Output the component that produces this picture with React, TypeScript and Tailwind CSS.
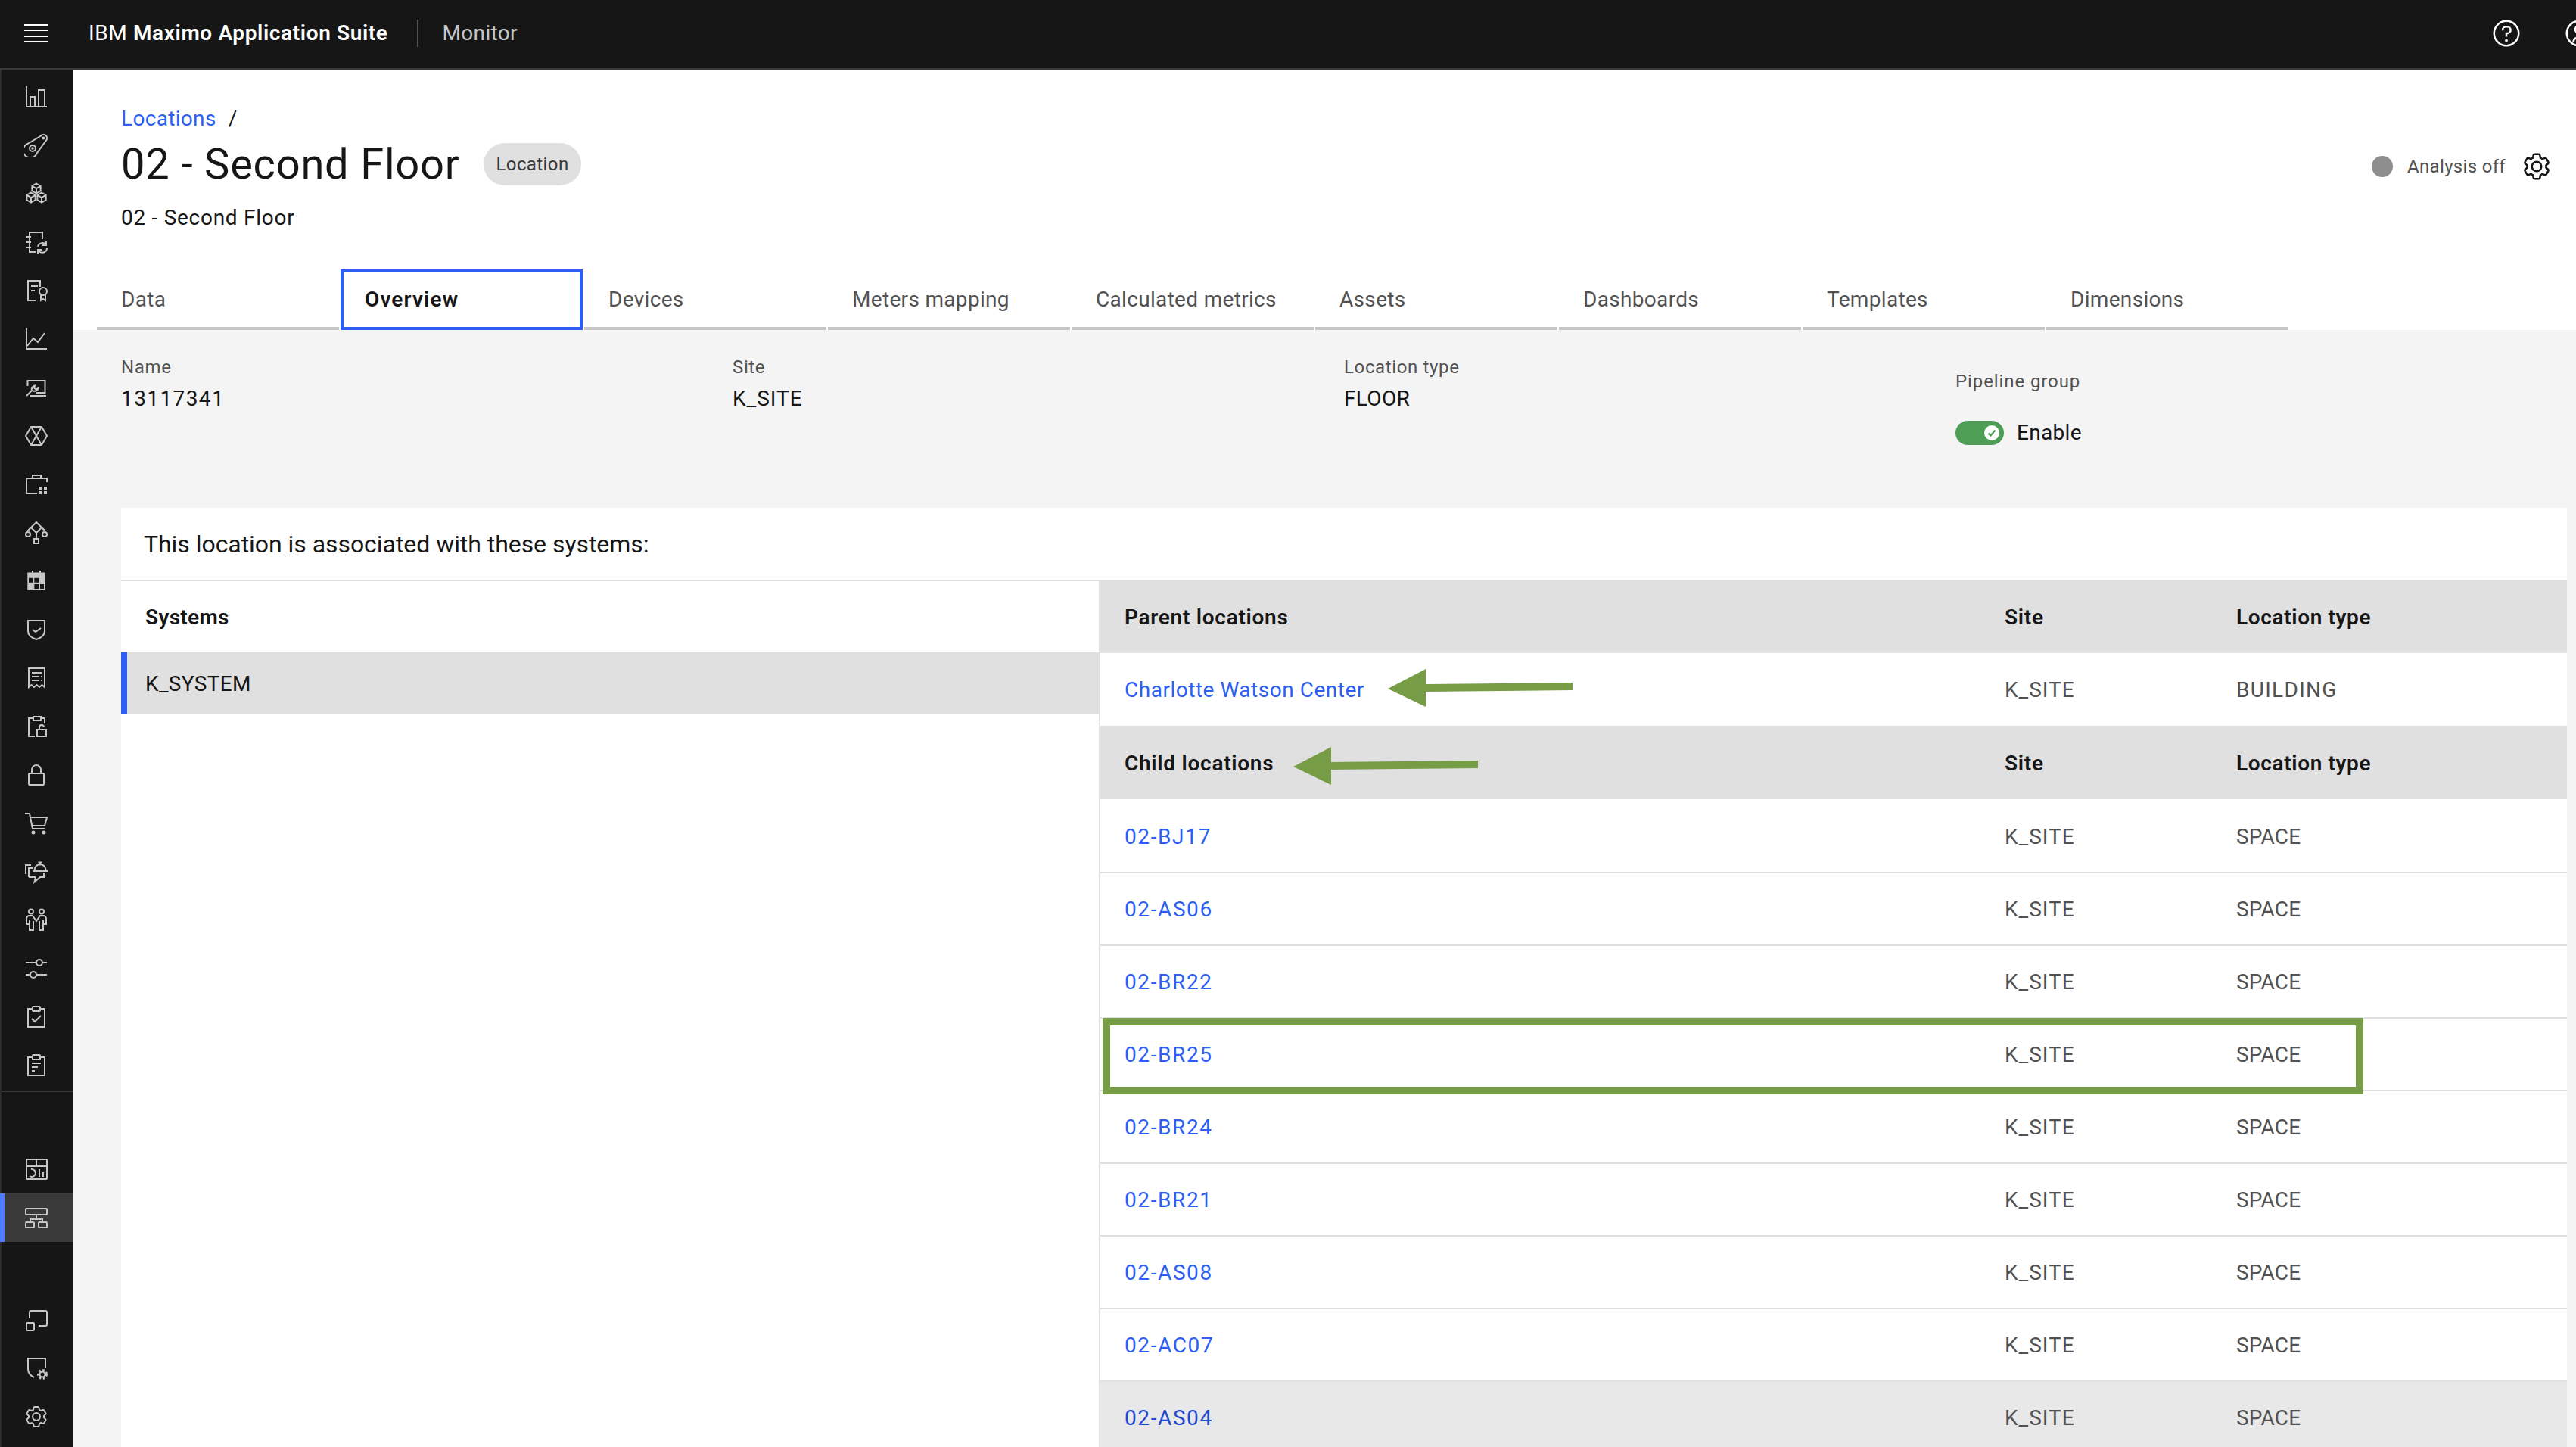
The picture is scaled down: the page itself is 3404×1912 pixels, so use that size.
import React from "react";

const SETTINGS = "M27 16.76c0-.25 0-.5 0-.76s0-.51 0-.77l1.92-1.68A2 2 0 0 0 29.3 11l-2.36-4a2 2 0 0 0-1.73-1 2 2 0 0 0-.64.1l-2.43.82a11.35 11.35 0 0 0-1.31-.75l-.51-2.52a2 2 0 0 0-2-1.61h-4.68a2 2 0 0 0-2 1.61l-.51 2.52a11.48 11.48 0 0 0-1.32.75l-2.38-.86A2 2 0 0 0 6.79 6a2 2 0 0 0-1.73 1L2.7 11a2 2 0 0 0 .41 2.51L5 15.24c0 .25 0 .5 0 .76s0 .51 0 .77l-1.92 1.68A2 2 0 0 0 2.7 21l2.36 4a2 2 0 0 0 1.73 1 2 2 0 0 0 .64-.1l2.43-.82a11.35 11.35 0 0 0 1.31.75l.51 2.52a2 2 0 0 0 2 1.61h4.72a2 2 0 0 0 2-1.61l.51-2.52a11.48 11.48 0 0 0 1.32-.75l2.42.82a2 2 0 0 0 .64.1 2 2 0 0 0 1.73-1l2.28-4a2 2 0 0 0-.41-2.51ZM25.21 24l-3.43-1.16a8.86 8.86 0 0 1-2.71 1.57L18.36 28h-4.72l-.71-3.55a9.36 9.36 0 0 1-2.7-1.57L6.79 24l-2.36-4 2.72-2.4a8.9 8.9 0 0 1 0-3.13L4.43 12l2.36-4 3.43 1.16a8.86 8.86 0 0 1 2.71-1.57L13.64 4h4.72l.71 3.55a9.36 9.36 0 0 1 2.7 1.57L25.21 8l2.36 4-2.72 2.4a8.9 8.9 0 0 1 0 3.13L27.57 20Z";
const SETTINGS2 = "M16 22a6 6 0 1 1 6-6 5.94 5.94 0 0 1-6 6Zm0-10a3.91 3.91 0 0 0-4 4 3.91 3.91 0 0 0 4 4 3.91 3.91 0 0 0 4-4 3.91 3.91 0 0 0-4-4Z";

function cube(cx: number, cy: number, r: number) {
  const w = r * 0.87;
  return `M${cx} ${cy - r}L${cx + w} ${cy - r / 2}V${cy + r / 2}L${cx} ${cy + r}L${cx - w} ${cy + r / 2}V${cy - r / 2}ZM${cx - w} ${cy - r / 2}L${cx} ${cy}L${cx + w} ${cy - r / 2}M${cx} ${cy}V${cy + r}`;
}

function Ico({ children }: { children: React.ReactNode }) {
  return (
    <svg width="32" height="32" viewBox="0 0 32 32" fill="none" stroke="currentColor" strokeWidth="2">
      {children}
    </svg>
  );
}

const icons: React.ReactNode[] = [
  <Ico><path d="M3 2v27h27M8 29V16h6v13M19 29V7h8v22" /></Ico>,
  <Ico><path d="M4.5 14L22 3.5A4.5 4.5 0 0 1 29 9.5L17 26A9.5 9.5 0 1 1 4.5 14z" /><circle cx="11" cy="20" r="4" /><circle cx="11" cy="20" r="0.8" /><circle cx="25.3" cy="6.5" r="1" /></Ico>,
  <Ico><path d={cube(16, 9, 6.5)} /><path d={cube(9, 21, 6.5)} /><path d={cube(23, 21, 6.5)} /></Ico>,
  <Ico><path d="M24 12V3H7v26h8M3 9h6M3 16h6M3 23h6M18 22a6 6 0 0 1 11-2M30 24a6 6 0 0 1-11 3M29 15v5h-5M18 31v-5h5" /></Ico>,
  <Ico><path d="M15 29H5V3h16v8M9 10h9M9 16h5" /><circle cx="25" cy="17" r="5" /><path d="M22 21v8l3-2 3 2v-8" /></Ico>,
  <Ico><path d="M3 2v27h27M4 25l8-10 6 5 9-12" /></Ico>,
  <Ico><path d="M4.5 14V7h23v16H16M8 27h21M3 27l7-7M10 20c-1-3 1-6 4-6.5l-1 3 2.5 2 3-1.5c-.5 3-4 5-8.5 3" /></Ico>,
  <Ico><path d="M9 4h14l7 12-7 12H9L2 16zM9 4l14 24M23 4L9 28" /></Ico>,
  <Ico><path d="M30 13V8H3v20h14M11 8V4h11v4" /><path fill="currentColor" stroke="none" d="M19 19h5v4h-5zM26 19h4v4h-4zM19 25h5v4h-5zM26 25h4v4h-4z" /></Ico>,
  <Ico><path d="M16 2l7 7-7 7-7-7zM9 9l-5 5M23 9l5 5M16 16v7" /><circle cx="5" cy="18" r="3" /><circle cx="27" cy="18" r="3" /><rect x="13" y="24" width="6" height="6" /></Ico>,
  <svg width="32" height="32" viewBox="0 0 32 32" fill="currentColor">
    <path fillRule="evenodd" d="M10 2h2v2.500h8V2h2v2.500h5.700V27.700H4.300V4.500H10zM6 11.700v6h5v-6zM13.300 11.700v6h6v-6zM13.300 20v6h6v-6zM21 20v6h5v-6z" />
  </svg>,
  <Ico><path d="M5 4h22v14c0 5-5 9-11 11-6-2-11-6-11-11zM11 16l4 3 7-5" /></Ico>,
  <Ico><path d="M6 3h21v25l-3.5-3-3.5 3-3.5-3-3.500 3-3.500-3-3.500 3zM10 9h13M10 14h9M10 19h9M22 14h2M22 19h2" /></Ico>,
  <Ico><path d="M12 5H6v24h8M22 5h5v7M12 3h10v5H12z" /><rect x="17" y="20" width="12" height="9" /><path d="M20 20v-3a3 3 0 0 1 6 0" /></Ico>,
  <Ico><rect x="6" y="14" width="20" height="15" rx="1" /><path d="M10 14V9a6 6 0 0 1 12 0v5" /></Ico>,
  <Ico><path d="M1 3h6l4 20h16M8 8h22l-3 11H10" /><circle cx="12" cy="28" r="1.5" fill="currentColor" /><circle cx="26" cy="28" r="1.5" fill="currentColor" /></Ico>,
  <Ico><path d="M2 19V7h7M6 23V11h6M6 23h9M15 23l-1.500 6.500L21 23h5v-5M13.500 13.500a7.500 7.500 0 0 1 15 0M12 15h19M18.500 3.500h5M21 3.500v4" /></Ico>,
  <Ico><circle cx="9" cy="4.500" r="3" /><circle cx="23" cy="4.500" r="3" /><path d="M3 21v-7a4 4 0 0 1 4-4h4l5 7 5-7h4a4 4 0 0 1 4 4v7h-3M7 21H3M7 16v13h5V17M25 16v13h-5V17" /></Ico>,
  <Ico><path d="M2 8h14M24 8h6M2 24h6M16 24h14" /><circle cx="20" cy="8" r="4" /><circle cx="12" cy="24" r="4" /></Ico>,
  <Ico><path d="M11 5H5v24h22V5h-6M10 18l4 4 8-8" /><rect x="11" y="2" width="10" height="6" rx="1" /></Ico>,
  <Ico><path d="M11 5H5v24h22V5h-6M10 13h12M10 18h8M10 23h4" /><rect x="11" y="2" width="10" height="6" rx="1" /></Ico>,
];

const tableIcon = <Ico><rect x="3" y="3" width="27" height="26" rx="1" /><path d="M3 12h27M16 3v9M20 26V16M25 26v-6M9 16a5 5 0 1 1-2 9" /></Ico>;
const hierIcon = <Ico><rect x="2" y="4" width="28" height="8" rx="1" /><path d="M16 12v6M8 22v-4h16v4" /><rect x="2" y="22" width="11" height="7" rx="1" /><rect x="19" y="22" width="11" height="7" rx="1" /></Ico>;
const resizeIcon = <Ico><path d="M7 14V6a2 2 0 0 1 2-2h19a2 2 0 0 1 2 2v16a2 2 0 0 1-2 2h-9" /><rect x="3" y="20" width="10" height="10" rx="1" /></Ico>;
const shieldGear = <Ico><path d="M28 16V3H5v14c0 5 4 9 8 11" /><circle cx="24" cy="24" r="3.500" /><circle cx="24" cy="24" r="5.500" strokeWidth="3" strokeDasharray="2.500 2.600" /></Ico>;
const gearIcon = (
  <svg width="32" height="32" viewBox="0 0 32 32" fill="currentColor"><path d={SETTINGS} /><path d={SETTINGS2} /></svg>
);

const tabs = ["Data", "Overview", "Devices", "Meters mapping", "Calculated metrics", "Assets", "Dashboards", "Templates", "Dimensions"];
const rows = ["02-BJ17", "02-AS06", "02-BR22", "02-BR25", "02-BR24", "02-BR21", "02-AS08", "02-AC07"];

function SideItem({ children, selected }: { children: React.ReactNode; selected?: boolean }) {
  return (
    <div className={selected
      ? "h-[64px] -ml-[2px] flex items-center justify-center bg-[#393939] border-l-[6px] border-[#4d7dfc] pr-[6px]"
      : "h-[64px] pr-[2px] flex items-center justify-center"}>
      {children}
    </div>
  );
}

function HeaderRow({ title }: { title: string }) {
  return (
    <div className="grid grid-cols-[1163px_306px_1fr] items-center pl-[32px] pt-[2px] h-full bg-[#e0e0e0] font-semibold text-[#161616] tracking-[0.72px]">
      <div>{title}</div>
      <div>Site</div>
      <div className="tracking-[0.64px]">Location type</div>
    </div>
  );
}

export default function App() {
  return (
    <div className="relative w-[3404px] h-[1912px] overflow-hidden flex flex-col bg-[#f4f4f4] text-[28px] tracking-[0.32px] text-[#161616] [font-family:'Roboto','Liberation_Sans',sans-serif]">
      {/* top bar */}
      <header className="h-[92px] shrink-0 flex items-center bg-[#161616] border-b-2 border-[#393939] pb-[2px]">
        <div className="w-[96px] flex justify-center">
          <div className="w-[32px] h-[24px] flex flex-col justify-between">
            <div className="h-[2px] bg-white" /><div className="h-[2px] bg-white" /><div className="h-[2px] bg-white" /><div className="h-[2px] bg-white" />
          </div>
        </div>
        <div className="ml-[21px] text-white whitespace-nowrap tracking-[0.62px]">IBM <span className="font-semibold">Maximo Application Suite</span></div>
        <div className="ml-[38px] w-[2px] h-[36px] bg-[#525252]" />
        <div className="ml-[32px] text-[#c6c6c6]">Monitor</div>
        <div className="ml-auto flex items-center mr-[-24px]">
          <svg width="40" height="40" viewBox="0 0 32 32" fill="#fff" className="mr-[56px]">
            <path d="M16 2a14 14 0 1 0 14 14A14 14 0 0 0 16 2Zm0 26a12 12 0 1 1 12-12 12 12 0 0 1-12 12Z" />
            <circle cx="16" cy="23.5" r="1.5" />
            <path d="M17 8h-1.5a4.49 4.49 0 0 0-4.5 4.5v.5h2v-.5a2.5 2.5 0 0 1 2.5-2.5H17a2.5 2.5 0 0 1 0 5h-2v4.5h2V17a4.5 4.5 0 0 0 0-9Z" />
          </svg>
          <svg width="40" height="40" viewBox="0 0 32 32" fill="#fff">
            <path d="M16 2a14 14 0 1 0 14 14A14 14 0 0 0 16 2Zm0 26a12 12 0 1 1 12-12 12 12 0 0 1-12 12Z" />
            <path d="M16 7a5 5 0 1 0 5 5 5 5 0 0 0-5-5Zm-7 17.5a6 6 0 0 1 6-5h2a6 6 0 0 1 6 5l-2 1.5a4 4 0 0 0-4-4.5h-2a4 4 0 0 0-4 4.5Z" />
          </svg>
        </div>
      </header>

      <div className="flex-1 flex min-h-0">
        {/* side nav */}
        <aside className="w-[96px] shrink-0 bg-[#161616] border-l-2 border-[#2c2c2c] flex flex-col text-[#c6c6c6] pt-[4px]">
          {icons.map((ic, i) => <SideItem key={i}>{ic}</SideItem>)}
          <div className="h-[2px] bg-[#393939] mt-[1px] mb-[70px]" />
          <SideItem>{tableIcon}</SideItem>
          <SideItem selected>{hierIcon}</SideItem>
          <div className="h-[71px]" />
          <SideItem>{resizeIcon}</SideItem>
          <SideItem>{shieldGear}</SideItem>
          <SideItem>{gearIcon}</SideItem>
        </aside>

        {/* main */}
        <main className="flex-1 min-w-0 flex flex-col">
          <section className="h-[344px] shrink-0 bg-white flex flex-col">
            <div className="flex justify-between pl-[64px] pr-[32px] pt-[47px]">
              <div>
                <div className="h-[36px] leading-[36px] flex">
                  <span className="text-[#2d5ff5]">Locations</span>
                  <span className="ml-[16px]">/</span>
                </div>
                <div className="flex items-center mt-[10px] h-[64px]">
                  <h1 className="text-[56px] leading-[64px] font-normal tracking-[0.78px]">02 - Second Floor</h1>
                  <span className="ml-[32px] h-[56px] px-[16px] rounded-full bg-[#e0e0e0] flex items-center text-[24px] tracking-[0.4px] text-[#393939]">Location</span>
                </div>
                <div className="h-[36px] leading-[36px] mt-[21px] tracking-[0.72px]">02 - Second Floor</div>
              </div>
              <div className="flex items-center h-[40px] mt-[61px]">
                <span className="w-[28px] h-[28px] rounded-full bg-[#8d8d8d]" />
                <span className="ml-[19px] text-[24px] tracking-[0.32px] text-[#525252]">Analysis off</span>
                <span className="ml-[21px] text-[#161616]">
                  <svg width="40" height="40" viewBox="0 0 32 32" fill="currentColor"><path d={SETTINGS} /><path d={SETTINGS2} /></svg>
                </span>
              </div>
            </div>
            <div className="mt-auto ml-[32px] flex gap-[2px]">
              {tabs.map((t) => t === "Overview" ? (
                <div key={t} className="w-[320px] h-[80px] border-4 border-[#2d5ff5] pl-[28px] flex items-center font-semibold text-[#161616] tracking-[1.1px]">{t}</div>
              ) : (
                <div key={t} className="w-[320px] h-[80px] border-b-4 border-[#c6c6c6] pl-[32px] pt-[4px] flex items-center text-[#525252]">{t}</div>
              ))}
            </div>
          </section>

          <section className="h-[235px] shrink-0 pl-[64px] pr-[12px] grid grid-cols-4">
            {[["Name", "13117341", "tracking-[1.4px]"], ["Site", "K_SITE", "tracking-[1px]"], ["Location type", "FLOOR", ""]].map(([l, v, c]) => (
              <div key={l} className="pt-[33px]">
                <div className="h-[32px] leading-[32px] text-[24px] text-[#525252] tracking-[0.64px]">{l}</div>
                <div className={"h-[36px] leading-[36px] mt-[8px] " + c}>{v}</div>
              </div>
            ))}
            <div className="pt-[52px]">
              <div className="h-[32px] leading-[32px] text-[24px] text-[#525252] tracking-[0.9px]">Pipeline group</div>
              <div className="mt-[36px] flex items-center h-[32px]">
                <div className="w-[64px] h-[32px] rounded-full bg-[#4f9e55] flex items-center justify-end pr-[6px]">
                  <svg width="20" height="20" viewBox="0 0 20 20">
                    <circle cx="10" cy="10" r="10" fill="#fff" />
                    <path d="M5.5 10.5l3 3 6-7" fill="none" stroke="#4f9e55" strokeWidth="2.4" />
                  </svg>
                </div>
                <span className="ml-[17px]">Enable</span>
              </div>
            </div>
          </section>

          <section className="flex-1 min-h-0 ml-[64px] mr-[12px] bg-white flex flex-col overflow-hidden">
            <div className="h-[95px] shrink-0 pl-[30px] flex items-center text-[32px] tracking-[-0.05px]">This location is associated with these systems:</div>
            <div className="flex-1 flex min-h-0">
              <div className="w-[1292px] shrink-0 border-t-2 border-[#e0e0e0]">
                <div className="h-[94px] pl-[32px] pt-[2px] flex items-center font-semibold">Systems</div>
                <div className="h-[82px] bg-[#e0e0e0] border-l-8 border-[#2d5ff5] pl-[24px] pt-[2px] flex items-center">K_SYSTEM</div>
              </div>
              <div className="flex-1 min-w-0 border-l-2 border-[#e0e0e0]">
                <div className="h-[97px]"><HeaderRow title="Parent locations" /></div>
                <div className="h-[96px] grid grid-cols-[1163px_306px_1fr] items-center pl-[32px] pt-[2px] text-[#525252]">
                  <div className="text-[#2d5ff5] tracking-[0.52px]">Charlotte Watson Center</div>
                  <div className="tracking-[1px]">K_SITE</div>
                  <div className="tracking-[1.3px]">BUILDING</div>
                </div>
                <div className="h-[97px]"><HeaderRow title="Child locations" /></div>
                <div className="pt-[2px]">
                  {rows.map((r) => (
                    <div key={r} className="h-[96px] grid grid-cols-[1163px_306px_1fr] items-center pl-[32px] pt-[2px] border-b-2 border-[#e0e0e0] text-[#525252]">
                      <div className="text-[#2d5ff5] tracking-[1.6px]">{r}</div>
                      <div className="tracking-[1px]">K_SITE</div>
                      <div className="tracking-[0.1px]">SPACE</div>
                    </div>
                  ))}
                  <div className="h-[96px] grid grid-cols-[1163px_306px_1fr] items-center pl-[32px] bg-[#e8e8e8] text-[#525252]">
                    <div className="text-[#1f49d0] tracking-[1.6px]">02-AS04</div>
                    <div className="tracking-[1px]">K_SITE</div>
                    <div className="tracking-[0.1px]">SPACE</div>
                  </div>
                </div>
              </div>
            </div>
          </section>
        </main>
      </div>

      {/* green annotations */}
      <div className="absolute left-[1457px] top-[1345px] w-[1666px] h-[101px] border-[10px] border-[#769c45]" />
      <svg className="absolute left-[1834px] top-[884px]" width="246" height="52" viewBox="0 0 246 52">
        <path d="M0 26L50 0V20L244 18V28L50 30V50Z" fill="#769c45" />
      </svg>
      <svg className="absolute left-[1709px] top-[987px]" width="246" height="52" viewBox="0 0 246 52">
        <path d="M0 26L50 0V20L244 18V28L50 30V50Z" fill="#769c45" />
      </svg>
    </div>
  );
}
